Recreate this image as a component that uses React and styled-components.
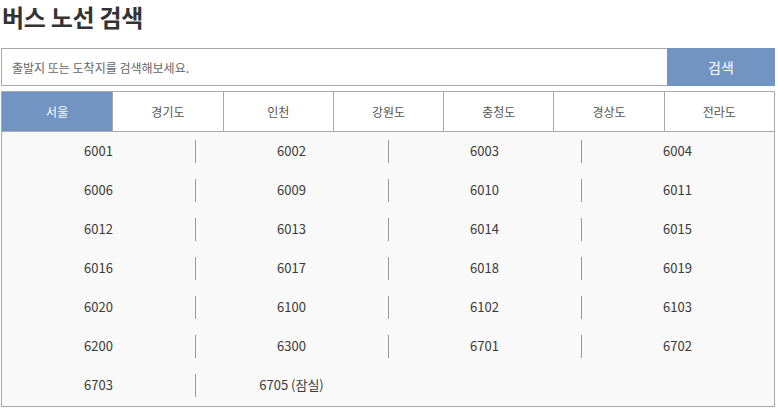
import React, { useState } from 'react'
import styled, { createGlobalStyle } from 'styled-components'

const regions = ['서울', '경기도', '인천', '강원도', '충청도', '경상도', '전라도']

const routes = [
  '6001', '6002', '6003', '6004',
  '6006', '6009', '6010', '6011',
  '6012', '6013', '6014', '6015',
  '6016', '6017', '6018', '6019',
  '6020', '6100', '6102', '6103',
  '6200', '6300', '6701', '6702',
  '6703', '6705 (잠실)',
]

const GlobalStyle = createGlobalStyle`
  body {
    margin: 0;
    background: #fff;
    font-family: "Noto Sans CJK KR", "Noto Sans", sans-serif;
    color: #333;
  }
`

export default function App() {
  const [active, setActive] = useState(0)
  const [query, setQuery] = useState('')

  return (
    <Page>
      <GlobalStyle />
      <Title>버스 노선 검색</Title>
      <SearchBox>
        <SearchInput
          value={query}
          onChange={(e) => setQuery(e.target.value)}
          placeholder="출발지 또는 도착지를 검색해보세요."
        />
        <SearchButton>검색</SearchButton>
      </SearchBox>
      <Tabs>
        {regions.map((r, i) => (
          <Tab key={r} $active={i === active} onClick={() => setActive(i)}>
            {r}
          </Tab>
        ))}
      </Tabs>
      <RouteList>
        {routes.map((r, i) => (
          <Route key={r} $first={i % 4 === 0}>{r}</Route>
        ))}
      </RouteList>
    </Page>
  )
}

const Page = styled.div`
  width: 774px;
  padding-left: 1px;
`

const Title = styled.h1`
  margin: 0 0 14px 1px;
  font-size: 24px;
  line-height: 34px;
  font-weight: 700;
  color: #333;
  letter-spacing: -0.3px;
`

const SearchBox = styled.div`
  display: flex;
  height: 38px;
  border: 1px solid #aaa;
  box-sizing: border-box;
`

const SearchInput = styled.input`
  flex: 1;
  border: none;
  outline: none;
  padding: 0 10px;
  font-family: inherit;
  font-size: 12px;
  color: #333;
  background: #fff;
  &::placeholder {
    color: #666;
  }
`

const SearchButton = styled.button`
  width: 108px;
  margin: -1px -1px -1px 0;
  border: none;
  background: #7194c2;
  color: #fff;
  font-family: inherit;
  font-size: 14px;
  cursor: pointer;
`

const Tabs = styled.div`
  display: grid;
  grid-template-columns: repeat(7, 1fr);
  margin-top: 5px;
  border: 1px solid #aaa;
  height: 41px;
  box-sizing: border-box;
`

const Tab = styled.div`
  display: flex;
  align-items: center;
  justify-content: center;
  font-size: 12px;
  color: ${(p) => (p.$active ? '#fff' : '#555')};
  background: ${(p) => (p.$active ? '#7194c2' : '#fff')};
  border-left: 1px solid #aaa;
  cursor: pointer;
  &:first-child {
    border-left: none;
  }
`

const RouteList = styled.div`
  display: grid;
  grid-template-columns: repeat(4, 1fr);
  grid-auto-rows: 39px;
  padding-bottom: 1px;
  border: 1px solid #aaa;
  border-top: none;
  background: #f9f9f9;
`

const Route = styled.div`
  position: relative;
  display: flex;
  align-items: center;
  justify-content: center;
  padding-bottom: 2px;
  font-size: 13px;
  color: #3a3a3a;
  &::before {
    content: '';
    display: ${(p) => (p.$first ? 'none' : 'block')};
    position: absolute;
    left: 0;
    top: 8px;
    height: 23px;
    border-left: 1px solid #999;
  }
`
